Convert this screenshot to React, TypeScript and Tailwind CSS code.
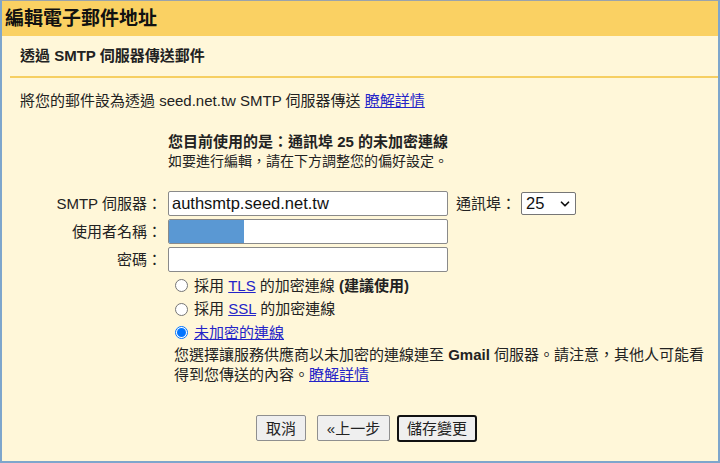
import { ChevronDown } from "lucide-react";

const font = { fontFamily: '"Liberation Sans", "Noto Sans CJK TC", sans-serif' };

function Radio({ checked }: { checked?: boolean }) {
  if (checked) {
    return (
      <span className="w-[13px] h-[13px] rounded-full border border-[#0075ff] bg-white flex items-center justify-center shrink-0">
        <span className="w-[9px] h-[9px] rounded-full bg-[#0075ff]" />
      </span>
    );
  }
  return <span className="w-[13px] h-[13px] rounded-full border border-[#767676] bg-white shrink-0" />;
}

function Field({ label, children }: { label: string; children: React.ReactNode }) {
  return (
    <div className="flex items-center h-[25px]">
      <div className="w-[161px] pr-[1px] text-right text-[15px] leading-[20px] text-[#222]">{label}</div>
      <div className="ml-[5px]">{children}</div>
    </div>
  );
}

function TextBox({ children }: { children?: React.ReactNode }) {
  return (
    <div className="w-[280px] h-[25px] bg-white border border-[#8a8a8a] rounded-[2px] flex items-center overflow-hidden">
      {children}
    </div>
  );
}

export default function App() {
  return (
    <div
      className="w-[720px] h-[463px] bg-[#fff7d9] border-t border-t-[#9aa3ab] border-x-2 border-b-2 border-[#7ea6cc] text-[#222] flex flex-col overflow-hidden"
      style={font}
    >
      {/* Header */}
      <div className="h-[35px] bg-[#fad163] pl-[3px] flex items-center text-[19px] font-bold leading-none text-[#111]">
        編輯電子郵件地址
      </div>
      <div className="h-[40px] pl-[18px] flex items-center text-[15px] font-bold">透過 SMTP 伺服器傳送郵件</div>
      <div className="ml-[8px] h-[2px] bg-[#f6cf62]" />

      {/* Intro */}
      <p className="pl-[18px] mt-[13px] text-[15px] leading-[20px]">
        將您的郵件設為透過 seed.net.tw SMTP 伺服器傳送{" "}
        <a className="text-[#2424c8] underline">瞭解詳情</a>
      </p>

      <div className="pl-[166px] mt-[21px]">
        <p className="text-[15px] font-bold leading-[20px]">您目前使用的是：通訊埠 25 的未加密連線</p>
        <p className="text-[14px] leading-[18px]">如要進行編輯，請在下方調整您的偏好設定。</p>
      </div>

      {/* Form */}
      <div className="mt-[21px] flex flex-col gap-[3px]">
        <div className="flex items-center">
          <Field label="SMTP 伺服器：">
            <TextBox>
              <span className="pl-[3px] text-[16.5px] leading-none text-[#111]">authsmtp.seed.net.tw</span>
            </TextBox>
          </Field>
          <span className="ml-[8px] text-[15px] leading-[20px]">通訊埠：</span>
          <div className="ml-[5px] w-[55px] h-[23px] bg-white border border-[#767676] rounded-[2px] flex items-center justify-between pl-[4px] pr-[3px]">
            <span className="text-[16.5px] leading-none text-[#111]">25</span>
            <ChevronDown className="w-[14px] h-[14px] text-[#111]" strokeWidth={3} />
          </div>
        </div>
        <Field label="使用者名稱：">
          <TextBox>
            <span className="w-[75px] h-full bg-[#5a98d3]" />
          </TextBox>
        </Field>
        <Field label="密碼：">
          <TextBox />
        </Field>
      </div>

      {/* Encryption options */}
      <div className="pl-[173px] mt-[2px] text-[15px]">
        <div className="flex items-center gap-[6px] h-[23.5px]">
          <Radio />
          <span className="leading-[20px]">
            採用 <a className="text-[#2424c8] underline">TLS</a> 的加密連線 <b>(建議使用)</b>
          </span>
        </div>
        <div className="flex items-center gap-[6px] h-[23.5px]">
          <Radio />
          <span className="leading-[20px]">
            採用 <a className="text-[#2424c8] underline">SSL</a> 的加密連線
          </span>
        </div>
        <div className="flex items-center gap-[6px] h-[23.5px]">
          <Radio checked />
          <a className="leading-[20px] text-[#2424c8] underline">未加密的連線</a>
        </div>
        <p className="mt-[0px] w-[532px] -ml-[1px] leading-[20px]">
          您選擇讓服務供應商以未加密的連線連至 <b>Gmail</b> 伺服器。請注意，其他人可能看得到您傳送的內容。
          <a className="text-[#2424c8] underline">瞭解詳情</a>
        </p>
      </div>

      {/* Buttons */}
      <div className="mt-[30px] pl-[254px] flex items-center text-[15px]">
        <button className="h-[26px] w-[50px] bg-[#efefef] border border-[#8f8f8f] rounded-[2px] leading-none">取消</button>
        <button className="ml-[11px] h-[26px] w-[73px] bg-[#efefef] border border-[#8f8f8f] rounded-[2px] leading-none">
          «上一步
        </button>
        <button className="ml-[7px] h-[27px] w-[80px] bg-[#efefef] border-2 border-[#111] rounded-[3px] leading-none">
          儲存變更
        </button>
      </div>
    </div>
  );
}
